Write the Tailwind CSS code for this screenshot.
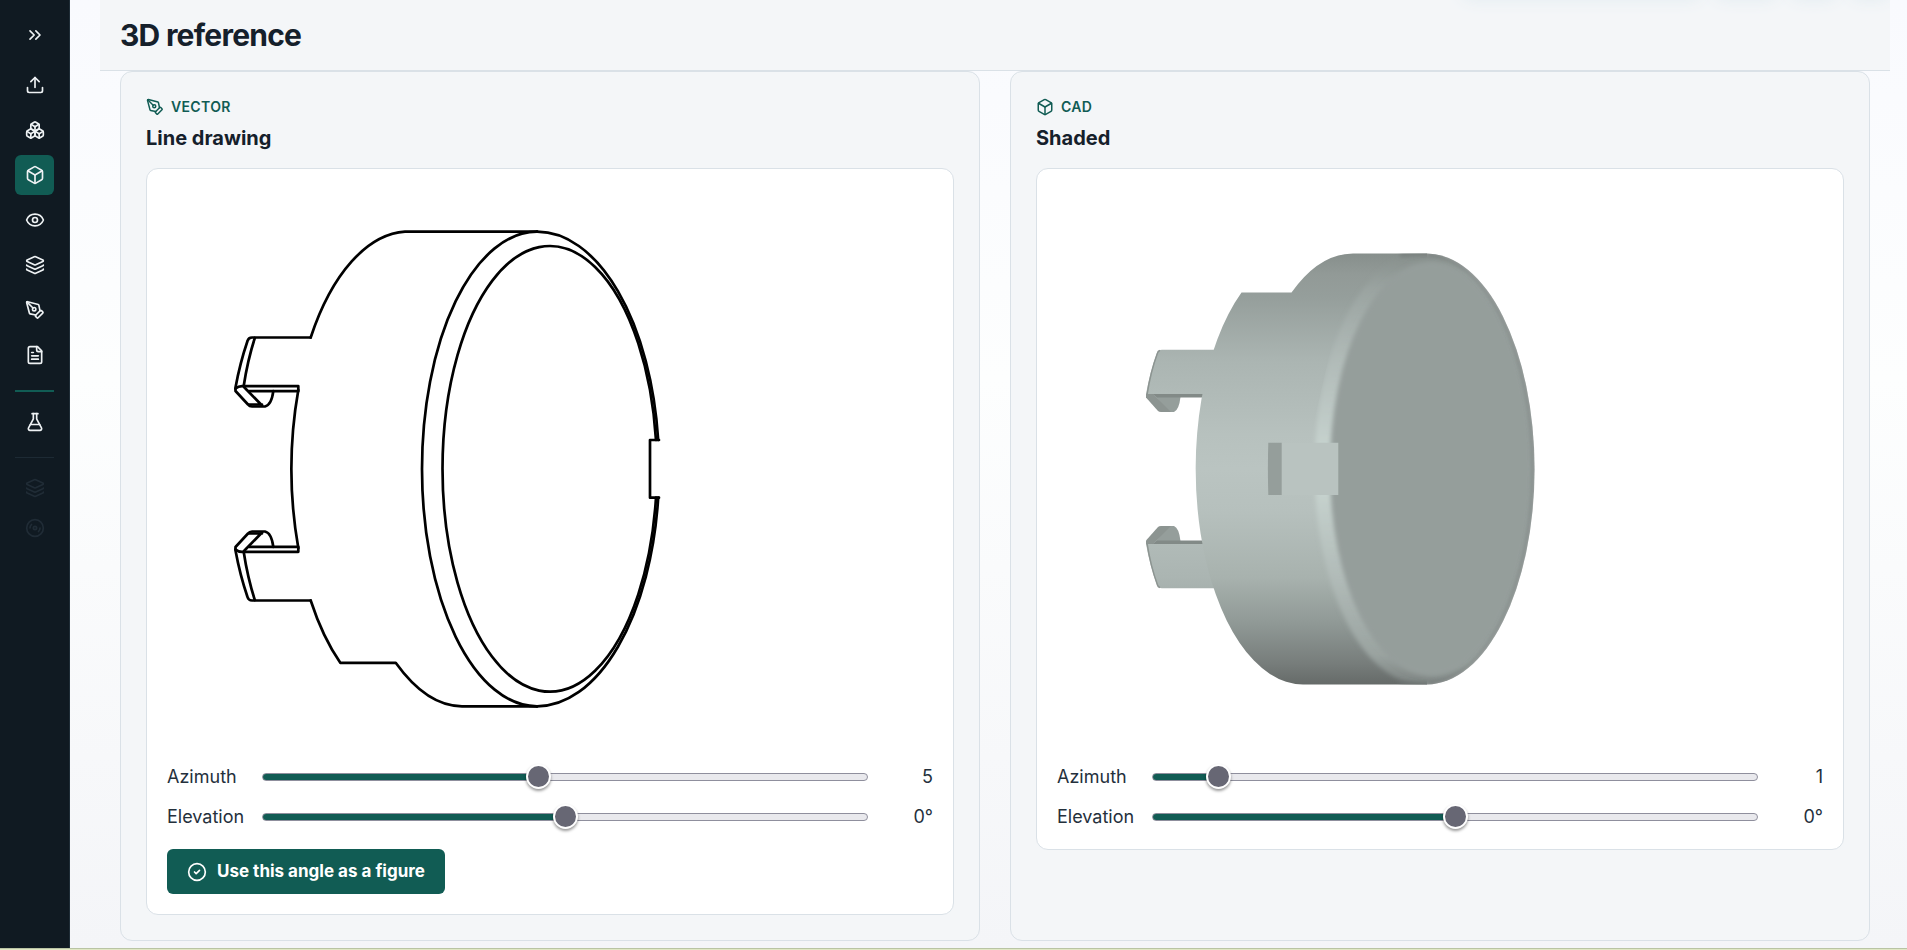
<!DOCTYPE html>
<html lang="en">

<head>
    <meta charset="UTF-8">
    <meta name="viewport" content="width=device-width, initial-scale=1.0">
    <title>3D reference</title>
    <script src="https://cdn.jsdelivr.net/npm/@tailwindcss/browser@4"></script>
</head>

<body class="flex min-h-screen flex-col bg-white font-[Inter,sans-serif] text-[#15202b]">
    <div class="flex flex-1">
        <!-- Sidebar -->
        <nav aria-label="Main" class="flex w-[70px] shrink-0 flex-col border-r border-[#1f2d37] bg-[#101a22] px-[15px] pt-[15px] text-[#eef2f4] [&_svg]:size-5 [&_svg]:fill-none [&_svg]:stroke-current [&_svg]:stroke-2">
            <button type="button" aria-label="Expand sidebar" class="mb-[10px] flex h-10 items-center justify-center rounded-md">
                <svg viewBox="0 0 24 24" stroke-linecap="round" stroke-linejoin="round"><path d="m6 17 5-5-5-5" /><path d="m13 17 5-5-5-5" /></svg>
            </button>
            <div class="flex flex-col gap-[5px]">
                <a href="#upload" aria-label="Upload" class="flex h-10 items-center justify-center rounded-md">
                    <svg viewBox="0 0 24 24" stroke-linecap="round" stroke-linejoin="round"><path d="M12 3v12" /><path d="m17 8-5-5-5 5" /><path d="M21 15v4a2 2 0 0 1-2 2H5a2 2 0 0 1-2-2v-4" /></svg>
                </a>
                <a href="#parts" aria-label="Parts" class="flex h-10 items-center justify-center rounded-md">
                    <svg viewBox="0 0 24 24" stroke-linecap="round" stroke-linejoin="round"><path d="M2.97 12.92A2 2 0 0 0 2 14.63v3.24a2 2 0 0 0 .97 1.71l3 1.8a2 2 0 0 0 2.06 0L12 19v-5.5l-5-3-4.03 2.42Z" /><path d="m7 16.5-4.74-2.85" /><path d="m7 16.5 5-3" /><path d="M7 16.5v5.17" /><path d="M12 13.5V19l3.97 2.38a2 2 0 0 0 2.06 0l3-1.8a2 2 0 0 0 .97-1.71v-3.24a2 2 0 0 0-.97-1.71L17 10.5l-5 3Z" /><path d="m17 16.5-5-3" /><path d="m17 16.5 4.74-2.85" /><path d="M17 16.5v5.17" /><path d="M7.97 4.42A2 2 0 0 0 7 6.13v4.37l5 3 5-3V6.13a2 2 0 0 0-.97-1.71l-3-1.8a2 2 0 0 0-2.06 0l-3 1.8Z" /><path d="M12 8 7.26 5.15" /><path d="m12 8 4.74-2.85" /><path d="M12 13.5V8" /></svg>
                </a>
                <a href="#reference" aria-label="3D reference" aria-current="page" class="flex h-10 items-center justify-center rounded-md bg-[#115c54]">
                    <svg viewBox="0 0 24 24" stroke-linecap="round" stroke-linejoin="round"><path d="M21 8a2 2 0 0 0-1-1.73l-7-4a2 2 0 0 0-2 0l-7 4A2 2 0 0 0 3 8v8a2 2 0 0 0 1 1.73l7 4a2 2 0 0 0 2 0l7-4A2 2 0 0 0 21 16Z" /><path d="m3.3 7 8.7 5 8.7-5" /><path d="M12 22V12" /></svg>
                </a>
                <a href="#views" aria-label="Views" class="flex h-10 items-center justify-center rounded-md">
                    <svg viewBox="0 0 24 24" stroke-linecap="round" stroke-linejoin="round"><path d="M2.062 12.348a1 1 0 0 1 0-.696 10.75 10.75 0 0 1 19.876 0 1 1 0 0 1 0 .696 10.75 10.75 0 0 1-19.876 0" /><circle cx="12" cy="12" r="3" /></svg>
                </a>
                <a href="#layers" aria-label="Layers" class="flex h-10 items-center justify-center rounded-md">
                    <svg viewBox="0 0 24 24" stroke-linecap="round" stroke-linejoin="round"><path d="M12.83 2.18a2 2 0 0 0-1.66 0L2.6 6.08a1 1 0 0 0 0 1.83l8.58 3.91a2 2 0 0 0 1.66 0l8.58-3.9a1 1 0 0 0 0-1.83z" /><path d="M2 12a1 1 0 0 0 .58.91l8.6 3.91a2 2 0 0 0 1.65 0l8.58-3.9A1 1 0 0 0 22 12" /><path d="M2 17a1 1 0 0 0 .58.91l8.6 3.91a2 2 0 0 0 1.65 0l8.58-3.9A1 1 0 0 0 22 17" /></svg>
                </a>
                <a href="#drawing" aria-label="Drawing" class="flex h-10 items-center justify-center rounded-md">
                    <svg viewBox="0 0 24 24" stroke-linecap="round" stroke-linejoin="round"><path d="M15.707 21.293a1 1 0 0 1-1.414 0l-1.586-1.586a1 1 0 0 1 0-1.414l5.586-5.586a1 1 0 0 1 1.414 0l1.586 1.586a1 1 0 0 1 0 1.414z" /><path d="m18 13-1.375-6.874a1 1 0 0 0-.746-.776L3.235 2.028a1 1 0 0 0-1.207 1.207L5.35 15.879a1 1 0 0 0 .776.746L13 18" /><path d="m2.3 2.3 7.286 7.286" /><circle cx="11" cy="11" r="2" /></svg>
                </a>
                <a href="#document" aria-label="Document" class="flex h-10 items-center justify-center rounded-md">
                    <svg viewBox="0 0 24 24" stroke-linecap="round" stroke-linejoin="round"><path d="M15 2H6a2 2 0 0 0-2 2v16a2 2 0 0 0 2 2h12a2 2 0 0 0 2-2V7Z" /><path d="M14 2v4a2 2 0 0 0 2 2h4" /><path d="M10 9H8" /><path d="M16 13H8" /><path d="M16 17H8" /></svg>
                </a>
            </div>
            <hr class="mt-[15px] mb-[10px] border-t-2 border-[#115c54]">
            <a href="#lab" aria-label="Lab" class="flex h-10 items-center justify-center rounded-md">
                <svg viewBox="0 0 24 24" stroke-linecap="round" stroke-linejoin="round"><path d="M14 2v6a2 2 0 0 0 .245.96l5.51 10.08A2 2 0 0 1 18 22H6a2 2 0 0 1-1.755-2.96l5.51-10.08A2 2 0 0 0 10 8V2" /><path d="M6.453 15h11.094" /><path d="M8.5 2h7" /></svg>
            </a>
            <hr class="mt-[15px] mb-[10px] border-[#1d2a34]">
            <div class="flex flex-col text-[#202c36]">
                <button type="button" disabled aria-label="Stack" class="flex h-10 items-center justify-center">
                    <svg viewBox="0 0 24 24" stroke-linecap="round" stroke-linejoin="round"><path d="M12.83 2.18a2 2 0 0 0-1.66 0L2.6 6.08a1 1 0 0 0 0 1.83l8.58 3.91a2 2 0 0 0 1.66 0l8.58-3.9a1 1 0 0 0 0-1.83z" /><path d="M2 12a1 1 0 0 0 .58.91l8.6 3.91a2 2 0 0 0 1.65 0l8.58-3.9A1 1 0 0 0 22 12" /><path d="M2 17a1 1 0 0 0 .58.91l8.6 3.91a2 2 0 0 0 1.65 0l8.58-3.9A1 1 0 0 0 22 17" /></svg>
                </button>
                <button type="button" disabled aria-label="Disc" class="flex h-10 items-center justify-center">
                    <svg viewBox="0 0 24 24" stroke-linecap="round" stroke-linejoin="round"><circle cx="12" cy="12" r="10" /><path d="M6 12c0-1.7.7-3.2 1.8-4.2" /><circle cx="12" cy="12" r="2" /><path d="M18 12c0 1.7-.7 3.2-1.8 4.2" /></svg>
                </button>
            </div>
        </nav>

        <!-- Page -->
        <main class="min-w-0 flex-1 bg-linear-to-b from-[#f9fafe] via-[#fdfefe] via-40% to-[#f4f5f8] pr-[17px] pb-[7px] pl-[30px]">
            <header class="relative flex h-[71px] items-center overflow-hidden border-b border-[#dae1e7] bg-[#f4f6f8] px-5">
                <h1 class="text-3xl leading-9 font-bold tracking-tight">3D reference</h1>
                <!-- Shadow of the floating toolbar above the fold -->
                <div class="absolute -top-6 right-0 flex h-5 gap-3">
                    <span class="w-60 rounded-full shadow-[0_2px_18px_#dfeaef]"></span>
                    <span class="w-16 rounded-full shadow-[0_2px_18px_#dfeaef]"></span>
                    <span class="w-12 rounded-full shadow-[0_2px_18px_#dfeaef]"></span>
                    <span class="w-10 rounded-full shadow-[0_2px_18px_#dfeaef]"></span>
                </div>
            </header>

            <div class="grid grid-cols-2 gap-[30px] px-5">
                <!-- Line drawing -->
                <section class="rounded-xl border border-[#dae1e7] bg-[#f4f6f8] p-[25px]">
                    <p class="flex h-5 items-center gap-[7px] text-sm font-semibold tracking-wide text-[#115c54]">
                        <svg class="size-[18px] fill-none stroke-current stroke-2" viewBox="0 0 24 24" stroke-linecap="round" stroke-linejoin="round"><path d="M15.707 21.293a1 1 0 0 1-1.414 0l-1.586-1.586a1 1 0 0 1 0-1.414l5.586-5.586a1 1 0 0 1 1.414 0l1.586 1.586a1 1 0 0 1 0 1.414z" /><path d="m18 13-1.375-6.874a1 1 0 0 0-.746-.776L3.235 2.028a1 1 0 0 0-1.207 1.207L5.35 15.879a1 1 0 0 0 .776.746L13 18" /><path d="m2.3 2.3 7.286 7.286" /><circle cx="11" cy="11" r="2" /></svg>
                        VECTOR
                    </p>
                    <h2 class="mt-[6px] mb-[15px] text-xl leading-[30px] font-bold">Line drawing</h2>
                    <div class="rounded-xl border border-[#dae1e7] bg-white p-5">
                        <svg class="h-[560px] w-full" viewBox="167 189 766 560" preserveAspectRatio="xMinYMid meet" fill="none" stroke="#000" stroke-width="2.7" stroke-linecap="round" stroke-linejoin="round" role="img" aria-label="Line drawing of the part">
                            <!-- rim and face -->
                            <path d="M537 231.7A115 237.3 0 0 0 537 706.3" />
                            <path d="M537 231.7A122 237.3 0 0 1 658.200 440M658.200 497.700A122 237.3 0 0 1 537 706.3" />
                            <path d="M656 440A107.2 222.8 0 1 0 656 497.7" />
                            <path d="M659 440H650V497.7H659" />
                            <!-- body -->
                            <path d="M537 231.7H405A118.2 237.3 0 0 0 310.7 337.5" />
                            <path d="M298.3 390A118.2 237.3 0 0 0 298.3 548" />
                            <path d="M310.7 600.5A118.2 237.3 0 0 0 340.3 662.8H395.7Q427 706.3 462 706.3H537" />
                            <!-- clip -->
                            <g id="line-clip">
                                <path d="M310.7 337.5H252Q248.500 337.500 247.500 341Q240 363 235.500 387.500L235.500 391L248 404.500Q249.500 406.500 252 406.500H265Q271.500 405 273.300 391.200" />
                                <path d="M254.800 338Q247.500 361 243.800 385.500" />
                                <path d="M235.500 388.500Q239 385.500 243.800 386.200H298.300V391.200H249" />
                                <path d="M244 387L262 405.500M249 404.500H262" />
                            </g>
                            <use href="#line-clip" transform="matrix(1 0 0 -1 0 938)" />
                        </svg>
                        <div class="flex flex-col gap-[15px] pt-[15px] text-lg leading-[25px] text-[#24303c]">
                            <div class="grid grid-cols-[75px_1fr_45px] items-center gap-5">
                                <label for="line-azimuth">Azimuth</label>
                                <input id="line-azimuth" type="range" min="0" max="11" value="5" style="--fill: 45.6%" class="h-[25px] w-full appearance-none bg-transparent [&::-webkit-slider-runnable-track]:h-2 [&::-webkit-slider-runnable-track]:rounded [&::-webkit-slider-runnable-track]:border [&::-webkit-slider-runnable-track]:border-[#8f8f9d] [&::-webkit-slider-runnable-track]:bg-[linear-gradient(to_right,#115c54_var(--fill),#e9e9ed_var(--fill))] [&::-webkit-slider-runnable-track]:bg-origin-border [&::-webkit-slider-thumb]:-mt-[10px] [&::-webkit-slider-thumb]:size-[25px] [&::-webkit-slider-thumb]:appearance-none [&::-webkit-slider-thumb]:rounded-full [&::-webkit-slider-thumb]:border-2 [&::-webkit-slider-thumb]:border-white [&::-webkit-slider-thumb]:bg-[#676774] [&::-webkit-slider-thumb]:shadow-[0_2px_3px_#0006]">
                                <output for="line-azimuth" class="text-right">5</output>
                            </div>
                            <div class="grid grid-cols-[75px_1fr_45px] items-center gap-5">
                                <label for="line-elevation">Elevation</label>
                                <input id="line-elevation" type="range" min="-90" max="90" value="0" style="--fill: 50%" class="h-[25px] w-full appearance-none bg-transparent [&::-webkit-slider-runnable-track]:h-2 [&::-webkit-slider-runnable-track]:rounded [&::-webkit-slider-runnable-track]:border [&::-webkit-slider-runnable-track]:border-[#8f8f9d] [&::-webkit-slider-runnable-track]:bg-[linear-gradient(to_right,#115c54_var(--fill),#e9e9ed_var(--fill))] [&::-webkit-slider-runnable-track]:bg-origin-border [&::-webkit-slider-thumb]:-mt-[10px] [&::-webkit-slider-thumb]:size-[25px] [&::-webkit-slider-thumb]:appearance-none [&::-webkit-slider-thumb]:rounded-full [&::-webkit-slider-thumb]:border-2 [&::-webkit-slider-thumb]:border-white [&::-webkit-slider-thumb]:bg-[#676774] [&::-webkit-slider-thumb]:shadow-[0_2px_3px_#0006]">
                                <output for="line-elevation" class="text-right">0°</output>
                            </div>
                        </div>
                        <button type="button" class="mt-5 flex h-[45px] items-center gap-[10px] rounded-md bg-[#115c54] px-5 text-[17px] font-bold text-white">
                            <svg class="size-5 fill-none stroke-current stroke-2" viewBox="0 0 24 24" stroke-linecap="round" stroke-linejoin="round"><circle cx="12" cy="12" r="10" /><path d="m9 12 2 2 4-4" /></svg>
                            Use this angle as a figure
                        </button>
                    </div>
                </section>

                <!-- Shaded -->
                <section class="rounded-xl border border-[#dae1e7] bg-[#f4f6f8] p-[25px]">
                    <p class="flex h-5 items-center gap-[7px] text-sm font-semibold tracking-wide text-[#115c54]">
                        <svg class="size-[18px] fill-none stroke-current stroke-2" viewBox="0 0 24 24" stroke-linecap="round" stroke-linejoin="round"><path d="M21 8a2 2 0 0 0-1-1.73l-7-4a2 2 0 0 0-2 0l-7 4A2 2 0 0 0 3 8v8a2 2 0 0 0 1 1.73l7 4a2 2 0 0 0 2 0l7-4A2 2 0 0 0 21 16Z" /><path d="m3.3 7 8.7 5 8.7-5" /><path d="M12 22V12" /></svg>
                        CAD
                    </p>
                    <h2 class="mt-[6px] mb-[15px] text-xl leading-[30px] font-bold">Shaded</h2>
                    <div class="rounded-xl border border-[#dae1e7] bg-white p-5">
                        <svg class="h-[560px] w-full" viewBox="1057 189 766 560" preserveAspectRatio="xMinYMid meet" role="img" aria-label="Shaded view of the part">
                            <defs>
                                <linearGradient id="body" gradientUnits="userSpaceOnUse" x1="0" y1="253" x2="0" y2="685">
                                    <stop offset="0" stop-color="#878f8c" />
                                    <stop offset=".05" stop-color="#929a97" />
                                    <stop offset=".1" stop-color="#959e9b" />
                                    <stop offset=".25" stop-color="#abb5b2" />
                                    <stop offset=".42" stop-color="#b7c1be" />
                                    <stop offset=".5" stop-color="#bac4c1" />
                                    <stop offset=".6" stop-color="#b6c0bd" />
                                    <stop offset=".75" stop-color="#a8b2ae" />
                                    <stop offset=".86" stop-color="#8f9895" />
                                    <stop offset=".95" stop-color="#777d7b" />
                                    <stop offset="1" stop-color="#656a68" />
                                </linearGradient>
                                <linearGradient id="rim" gradientUnits="userSpaceOnUse" x1="0" y1="253" x2="0" y2="685">
                                    <stop offset="0" stop-color="#868e8b" />
                                    <stop offset=".08" stop-color="#9aa3a0" />
                                    <stop offset=".25" stop-color="#b1bbb8" />
                                    <stop offset=".45" stop-color="#c6d2ce" />
                                    <stop offset=".55" stop-color="#c6d2ce" />
                                    <stop offset=".75" stop-color="#b1bbb8" />
                                    <stop offset=".93" stop-color="#9aa3a0" />
                                    <stop offset="1" stop-color="#7b8280" />
                                </linearGradient>
                                <linearGradient id="edge" gradientUnits="userSpaceOnUse" x1="0" y1="253" x2="0" y2="685">
                                    <stop offset="0" stop-color="#868e8b" />
                                    <stop offset=".05" stop-color="#959e9b" />
                                    <stop offset=".95" stop-color="#959e9b" />
                                    <stop offset="1" stop-color="#7b8280" />
                                </linearGradient>
                                <filter id="soft" x="-10%" y="-10%" width="120%" height="120%"><feGaussianBlur stdDeviation="2" /></filter>
                                <clipPath id="disc"><path d="M1353 253.500H1427A107.600 215.500 0 0 1 1427 684.500H1303V469z" /></clipPath>
                            </defs>
                            <!-- clip -->
                            <g id="shaded-clip">
                                <path fill="#8c9491" d="M1146 393V397.500L1158 411Q1159 412 1161 412H1173L1152 393z" />
                                <path fill="#959e9b" d="M1152 393L1171 412H1174Q1179 410 1180.500 397H1203V393z" />
                                <path fill="#828a87" d="M1152 393.500H1203V397.500H1157z" />
                                <path fill="url(#body)" d="M1215 349.700H1162Q1158 349.700 1157 353Q1150 372 1146 394H1215z" />
                                <path fill="none" stroke="#8c9491" stroke-width="1.500" d="M1160 350.500Q1158 351 1157.500 353Q1150.500 372 1147 395" />
                            </g>
                            <use href="#shaded-clip" transform="matrix(1 0 0 -1 0 938)" />
                            <!-- body -->
                            <path fill="url(#body)" d="M1241.500 292.500H1291.500A107.500 215.500 0 0 1 1353 253.500H1427V684.500H1303A107.500 215.500 0 0 1 1241.500 292.500z" />
                            <!-- disc -->
                            <g clip-path="url(#disc)">
                                <ellipse cx="1423" cy="469" rx="108.500" ry="215.500" fill="url(#rim)" filter="url(#soft)" />
                                <path fill="url(#edge)" filter="url(#soft)" d="M1427 253.500A107.600 215.500 0 0 1 1427 684.500z" />
                                <ellipse cx="1431" cy="469" rx="101" ry="207" fill="#959e9b" filter="url(#soft)" />
                                <path fill="none" stroke="#6f7674" stroke-width="3" filter="url(#soft)" d="M1400 255Q1414 253.500 1427 253.500A107.600 215.500 0 0 1 1427 684.500Q1414 684.500 1400 683" />
                            </g>
                            <!-- notch -->
                            <path fill="#b9c3c0" d="M1281 442.700H1338.300V495H1281z" />
                            <path fill="#959e9b" d="M1268.300 442.700H1281.700V495H1268.300Q1267.500 469 1268.300 442.700z" />
                        </svg>
                        <div class="flex flex-col gap-[15px] pt-[15px] text-lg leading-[25px] text-[#24303c]">
                            <div class="grid grid-cols-[75px_1fr_45px] items-center gap-5">
                                <label for="shaded-azimuth">Azimuth</label>
                                <input id="shaded-azimuth" type="range" min="0" max="11" value="1" style="--fill: 10.8%" class="h-[25px] w-full appearance-none bg-transparent [&::-webkit-slider-runnable-track]:h-2 [&::-webkit-slider-runnable-track]:rounded [&::-webkit-slider-runnable-track]:border [&::-webkit-slider-runnable-track]:border-[#8f8f9d] [&::-webkit-slider-runnable-track]:bg-[linear-gradient(to_right,#115c54_var(--fill),#e9e9ed_var(--fill))] [&::-webkit-slider-runnable-track]:bg-origin-border [&::-webkit-slider-thumb]:-mt-[10px] [&::-webkit-slider-thumb]:size-[25px] [&::-webkit-slider-thumb]:appearance-none [&::-webkit-slider-thumb]:rounded-full [&::-webkit-slider-thumb]:border-2 [&::-webkit-slider-thumb]:border-white [&::-webkit-slider-thumb]:bg-[#676774] [&::-webkit-slider-thumb]:shadow-[0_2px_3px_#0006]">
                                <output for="shaded-azimuth" class="text-right">1</output>
                            </div>
                            <div class="grid grid-cols-[75px_1fr_45px] items-center gap-5">
                                <label for="shaded-elevation">Elevation</label>
                                <input id="shaded-elevation" type="range" min="-90" max="90" value="0" style="--fill: 50%" class="h-[25px] w-full appearance-none bg-transparent [&::-webkit-slider-runnable-track]:h-2 [&::-webkit-slider-runnable-track]:rounded [&::-webkit-slider-runnable-track]:border [&::-webkit-slider-runnable-track]:border-[#8f8f9d] [&::-webkit-slider-runnable-track]:bg-[linear-gradient(to_right,#115c54_var(--fill),#e9e9ed_var(--fill))] [&::-webkit-slider-runnable-track]:bg-origin-border [&::-webkit-slider-thumb]:-mt-[10px] [&::-webkit-slider-thumb]:size-[25px] [&::-webkit-slider-thumb]:appearance-none [&::-webkit-slider-thumb]:rounded-full [&::-webkit-slider-thumb]:border-2 [&::-webkit-slider-thumb]:border-white [&::-webkit-slider-thumb]:bg-[#676774] [&::-webkit-slider-thumb]:shadow-[0_2px_3px_#0006]">
                                <output for="shaded-elevation" class="text-right">0°</output>
                            </div>
                        </div>
                    </div>
                </section>
            </div>
        </main>
    </div>
    <div class="h-[2px] border-t border-[#b9c4a4] bg-[#e0e8c4]"></div>
</body>

</html>
